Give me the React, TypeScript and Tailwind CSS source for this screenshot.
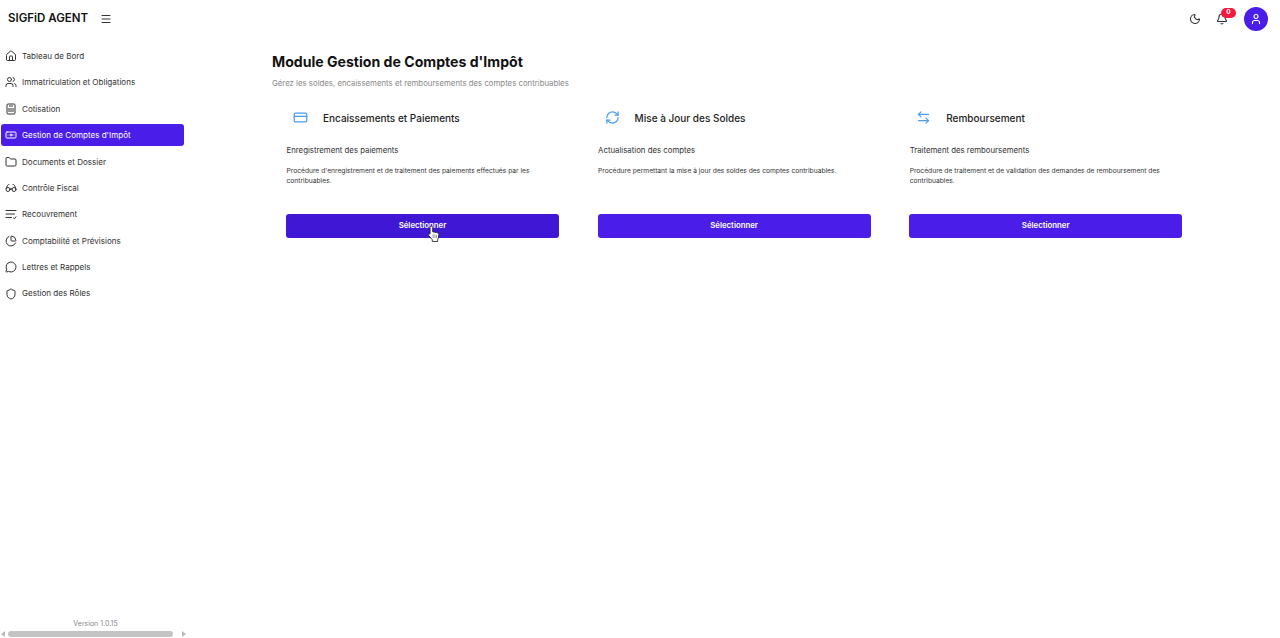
import React from 'react';
import {
  ArrowLeftRight,
  Banknote,
  Bell,
  CreditCard,
  Folder,
  Glasses,
  Home,
  Menu,
  MessageCircle,
  Moon,
  PieChart,
  RefreshCw,
  Shield,
  User,
  Users,
} from 'lucide-react';

type IconProps = { className?: string; strokeWidth?: number };

const CotisationIcon = ({ className, strokeWidth }: IconProps) => (
  <svg viewBox="0 0 24 24" fill="none" stroke="currentColor" strokeWidth={strokeWidth} className={className}>
    <rect x="4" y="2" width="16" height="20" rx="2" />
    <path d="M8 6h8M8 10v8M12 10v8M16 10v8" />
  </svg>
);

const RecouvrementIcon = ({ className, strokeWidth }: IconProps) => (
  <svg viewBox="0 0 24 24" fill="none" stroke="currentColor" strokeWidth={strokeWidth} strokeLinecap="round" strokeLinejoin="round" className={className}>
    <path d="M2 5h20M2 12h17M2 19h11M17 20l2 1.500 3-4" />
  </svg>
);

const NAV_ITEMS = [
  { label: 'Tableau de Bord', icon: Home },
  { label: 'Immatriculation et Obligations', icon: Users },
  { label: 'Cotisation', icon: CotisationIcon },
  { label: "Gestion de Comptes d'Impôt", icon: Banknote, active: true },
  { label: 'Documents et Dossier', icon: Folder },
  { label: 'Contrôle Fiscal', icon: Glasses },
  { label: 'Recouvrement', icon: RecouvrementIcon },
  { label: 'Comptabilité et Prévisions', icon: PieChart },
  { label: 'Lettres et Rappels', icon: MessageCircle },
  { label: 'Gestion des Rôles', icon: Shield },
];

const CARDS = [
  {
    title: 'Encaissements et Paiements',
    subtitle: 'Enregistrement des paiements',
    text: "Procédure d'enregistrement et de traitement des paiements effectués par les contribuables.",
    icon: CreditCard,
    pressed: true,
  },
  {
    title: 'Mise à Jour des Soldes',
    subtitle: 'Actualisation des comptes',
    text: 'Procédure permettant la mise à jour des soldes des comptes contribuables.',
    icon: RefreshCw,
  },
  {
    title: 'Remboursement',
    subtitle: 'Traitement des remboursements',
    text: 'Procédure de traitement et de validation des demandes de remboursement des contribuables.',
    icon: ArrowLeftRight,
  },
];

const HandCursor = () => (
  <svg viewBox="0 0 16 20" className="absolute left-[141px] top-[11px] w-[14px] h-[18px]">
    <path
      d="M5 1c.9 0 1.500.6 1.500 1.500v5l4.500.8c1.600.3 2.500 1 2.500 2.600 0 2-.5 3.800-1.300 5.600v2H6v-2L1.800 11.500c-.7-1 .5-2.300 1.700-1.400V2.500C3.500 1.600 4.100 1 5 1z"
      fill="#fff"
      stroke="#222"
      strokeWidth="1"
    />
    <path d="M7 10.500v4M9 10.500v4M11 11v3.500" stroke="#555" strokeWidth="0.7" />
  </svg>
);

export default function App() {
  return (
    <div className="h-screen w-full flex flex-col bg-white overflow-hidden font-['Inter',sans-serif]">
      <header className="h-[37px] shrink-0 flex items-center justify-between pl-2 pr-3">
        <div className="flex items-center gap-3">
          <span className="text-[11.500px] font-semibold text-[#111]">SIGFiD AGENT</span>
          <Menu className="w-[12px] h-[12px] text-[#333]" />
        </div>
        <div className="flex items-center">
          <Moon className="w-[12px] h-[12px] text-[#333] mr-[15px]" strokeWidth={2.2} />
          <div className="relative mr-[16px]">
            <Bell className="w-[12px] h-[12px] text-[#333]" strokeWidth={2.2} />
            <span className="absolute left-[5px] top-[-5px] w-[15px] h-[10px] rounded-[5px] bg-[#f5183f] text-white text-[6.500px] font-bold flex items-center justify-center leading-none">
              0
            </span>
          </div>
          <div className="w-6 h-6 rounded-full bg-[#4a1ee8] flex items-center justify-center">
            <User className="w-[12px] h-[12px] text-white" strokeWidth={2.4} />
          </div>
        </div>
      </header>
      <div className="flex-1 flex min-h-0">
        <aside className="w-[190px] shrink-0 flex flex-col pl-px">
          <nav className="flex flex-col gap-[4.400px] pt-2 w-[183px]">
            {NAV_ITEMS.map((item) => {
              const Icon = item.icon;
              return (
                <div
                  key={item.label}
                  className={`h-[22px] flex items-center gap-[5px] pl-[4px] rounded-[3px] text-[8.050px] ${
                    item.active ? 'bg-[#4a1ee8] text-white' : 'text-[#333]'
                  }`}
                >
                  <Icon className="w-[12px] h-[12px] shrink-0" strokeWidth={2} />
                  <span>{item.label}</span>
                </div>
              );
            })}
          </nav>
          <div className="mt-auto">
            <p className="text-center text-[7px] text-[#888] mb-[1px]">Version 1.0.15</p>
            <div className="flex items-center h-[8px] -ml-px">
              <span className="w-0 h-0 ml-[1px] border-y-[3px] border-y-transparent border-r-[4px] border-r-[#bbb]" />
              <div className="ml-[3px] w-[165px] h-[6px] rounded-full bg-[#c4c4c4]" />
              <span className="w-0 h-0 ml-[9px] border-y-[3px] border-y-transparent border-l-[4px] border-l-[#bbb]" />
            </div>
          </div>
        </aside>
        <main className="flex-1 pl-[82px] pt-[15px]">
          <h1 className="text-[14.100px] leading-5 font-bold text-[#111]">Module Gestion de Comptes d'Impôt</h1>
          <p className="text-[7.800px] leading-3 mt-[5px] text-[#888]">
            Gérez les soldes, encaissements et remboursements des comptes contribuables
          </p>
          <div className="grid grid-cols-3 w-[924.200px] gap-x-[10.600px] mt-[15px]">
            {CARDS.map((card) => {
              const Icon = card.icon;
              return (
                <div key={card.title} className="px-[14px]">
                  <div className="h-[28px] flex items-center pl-[7px]">
                    <Icon className="w-[15px] h-[15px] text-[#4a9cf5] shrink-0 -translate-y-px" strokeWidth={2} />
                    <span className="ml-[15px] text-[10px] font-medium text-[#222]">{card.title}</span>
                  </div>
                  <p className="text-[7.800px] leading-3 text-[#333] mt-[12px] pl-[0.500px]">{card.subtitle}</p>
                  <p className="text-[6.700px] leading-[10px] h-[48px] text-[#333] mt-[10px] pl-[0.500px]">{card.text}</p>
                  <div
                    className={`relative h-6 rounded-[3px] flex items-center justify-center text-[7.800px] font-semibold text-white ${
                      card.pressed ? 'bg-[#3f17d4]' : 'bg-[#4a1ee8]'
                    }`}
                  >
                    Sélectionner
                    {card.pressed && <HandCursor />}
                  </div>
                </div>
              );
            })}
          </div>
        </main>
      </div>
    </div>
  );
}
